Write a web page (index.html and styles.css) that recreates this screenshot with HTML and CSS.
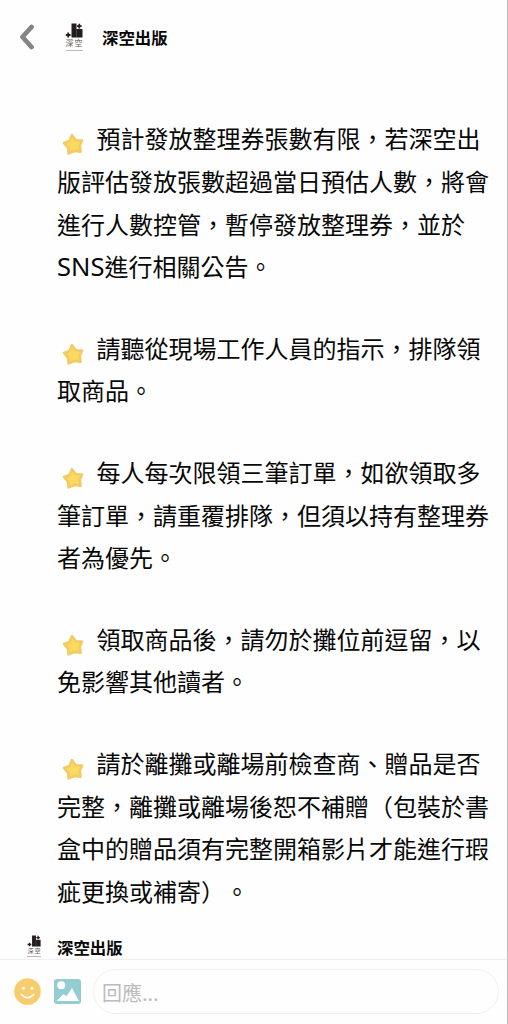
FILE: index.html
```html
<!DOCTYPE html>
<html lang="zh-Hant">
<head>
<meta charset="utf-8">
<title>深空出版</title>
<link rel="stylesheet" href="styles.css">
</head>
<body>
<svg class="defs" width="0" height="0" aria-hidden="true">
  <symbol id="star" viewBox="0 0 24 24">
    <path d="M11 3.2 L14.8 8.2 L21 8.5 L18.8 13.8 L19.6 19.6 L13.4 19 L7.6 21.4 L7 15.6 L3 11 L8.6 9 Z" fill="#fad65c" stroke="#f0cb66" stroke-width="2.6" stroke-linejoin="round"/>
    <path d="M11.2 5.6 L13.8 9.8 L18.6 10 L16.8 13.6 L17 17.2 L13 16.6 L9.2 18.2 L8.6 14.4 L5.8 11.6 L9.8 10.4 Z" fill="#fcda60"/>
  </symbol>
  <symbol id="mark" viewBox="0 0 18 15">
    <path d="M6.5 .5h5v5.5h6v8.5H6.5z" fill="#251d1d"/>
    <path d="M11.5 7v7" stroke="#75696a" stroke-width=".5"/>
    <path d="M14.3 .8v4.6M12 3.1h4.6M3.2 9.6v4.8M.8 12h4.8" stroke="#251d1d" stroke-width="1.8"/>
  </symbol>
</svg>
<div class="screen">
  <header class="topbar">
    <svg class="back" viewBox="0 0 16 26"><path d="M12.5 3 L3.5 13 L12.5 23" fill="none" stroke="#858585" stroke-width="4.8" stroke-linecap="round" stroke-linejoin="round"/></svg>
    <div class="logo">
      <svg class="logo-mark"><use href="#mark"/></svg>
      <span class="logo-name">深空</span>
      <span class="logo-rule"></span>
    </div>
    <h1 class="title">深空出版</h1>
  </header>
  <main class="post">
    <p><svg class="star"><use href="#star"/></svg>預計發放整理券張數有限，若深空出<br>版評估發放張數超過當日預估人數，將會<br>進行人數控管，暫停發放整理券，並於<br><span class="latin">SNS</span>進行相關公告。</p>
    <p><svg class="star"><use href="#star"/></svg>請聽從現場工作人員的指示，排隊領<br>取商品。</p>
    <p><svg class="star"><use href="#star"/></svg>每人每次限領三筆訂單，如欲領取多<br>筆訂單，請重覆排隊，但須以持有整理券<br>者為優先。</p>
    <p><svg class="star"><use href="#star"/></svg>領取商品後，請勿於攤位前逗留，以<br>免影響其他讀者。</p>
    <p><svg class="star"><use href="#star"/></svg>請於離攤或離場前檢查商、贈品是否<br>完整，離攤或離場後恕不補贈（包裝於書<br>盒中的贈品須有完整開箱影片才能進行瑕<br>疵更換或補寄）。</p>
  </main>
  <section class="comment">
    <div class="logo logo-small">
      <svg class="logo-mark"><use href="#mark"/></svg>
      <span class="logo-name">深空</span>
      <span class="logo-rule"></span>
    </div>
    <span class="title">深空出版</span>
  </section>
  <footer class="reply">
    <svg class="tool smile" viewBox="0 0 27 27"><circle cx="13.5" cy="13.5" r="13.3" fill="#f6cc6c"/><circle cx="9.3" cy="10.2" r="1.5" fill="#fff"/><circle cx="18" cy="10.2" r="1.5" fill="#fff"/><path d="M7.3 16.4 Q13.5 23.2 19.7 16.4" fill="none" stroke="#fff" stroke-width="1.6" stroke-linecap="round"/></svg>
    <svg class="tool" viewBox="0 0 27 25"><rect width="27" height="25" rx="3" fill="#93ccd2"/><circle cx="7.2" cy="6.2" r="4" fill="#fff"/><path d="M2.5 22 L9.5 15 L12.5 17.2 L18 9 L25 22 Z" fill="#fff"/></svg>
    <div class="field">回應...</div>
  </footer>
</div>
</body>
</html>
```
FILE: styles.css
```css
* { box-sizing: border-box; }

body {
  margin: 0;
  background: #fefefe;
  color: #080808;
  font-family: "Noto Sans CJK TC", sans-serif;
  text-spacing-trim: space-all;
}

.defs { position: absolute; }

.screen {
  width: 508px;
  height: 1024px;
  display: flex;
  flex-direction: column;
  border-right: 1px solid #bdbdbd;
  overflow: hidden;
}

.topbar {
  height: 76px;
  flex: none;
  display: flex;
  align-items: center;
  padding-left: 19px;
}

.back { width: 16px; height: 26px; margin-top: -2px; }

.logo {
  width: 18px;
  height: 29px;
  margin: -2px 19px 0 30px;
  display: flex;
  flex-direction: column;
  align-items: center;
}

.logo-mark { width: 18px; height: 15px; flex: none; }

.logo-name {
  font-size: 8px;
  line-height: 10px;
  letter-spacing: 1.2px;
  margin-right: -1.2px;
  white-space: nowrap;
  color: #625a5a;
}

.logo-rule { width: 17px; height: 1px; margin-top: 2px; background: #bbb; }

.title {
  margin: 0;
  font-size: 16.4px;
  line-height: 24px;
  font-weight: 700;
}

.topbar .title { margin-top: -2px; }

.post {
  flex: none;
  height: 856px;
  padding: 41px 0 0 57px;
  font-size: 24px;
  line-height: 42.75px;
  white-space: nowrap;
}

.post p { margin: 0 0 38.65px; }

.latin {
  font-family: "Noto Sans", sans-serif;
  font-size: 25.5px;
  line-height: 1;
}

.star {
  width: 24px;
  height: 24px;
  margin: 0 11.5px 0 4px;
  vertical-align: -8px;
}

.comment {
  flex: none;
  height: 27px;
  display: flex;
  align-items: flex-start;
  padding: 3px 0 0 27px;
}

.comment .title { line-height: 24px; }

.logo-small { width: 14px; height: 23px; margin: 0 16px 0 0; }
.logo-small .logo-mark { width: 14px; height: 12px; }
.logo-small .logo-name { font-size: 6px; line-height: 8px; letter-spacing: 1px; margin-right: -1px; }
.logo-small .logo-rule { width: 14px; margin-top: 1px; }

.reply {
  flex: 1;
  display: flex;
  align-items: center;
  border-top: 1px solid #efefef;
  padding: 0 8px 1px 14px;
}

.tool { width: 27px; height: 25px; flex: none; }
.smile { height: 27px; margin-right: 13px; }

.field {
  flex: 1;
  height: 45px;
  margin-left: 12px;
  padding-left: 8px;
  border: 1px solid #f0f0f0;
  border-radius: 23px;
  font-size: 20px;
  line-height: 46px;
  color: #bcbcbc;
}
```
